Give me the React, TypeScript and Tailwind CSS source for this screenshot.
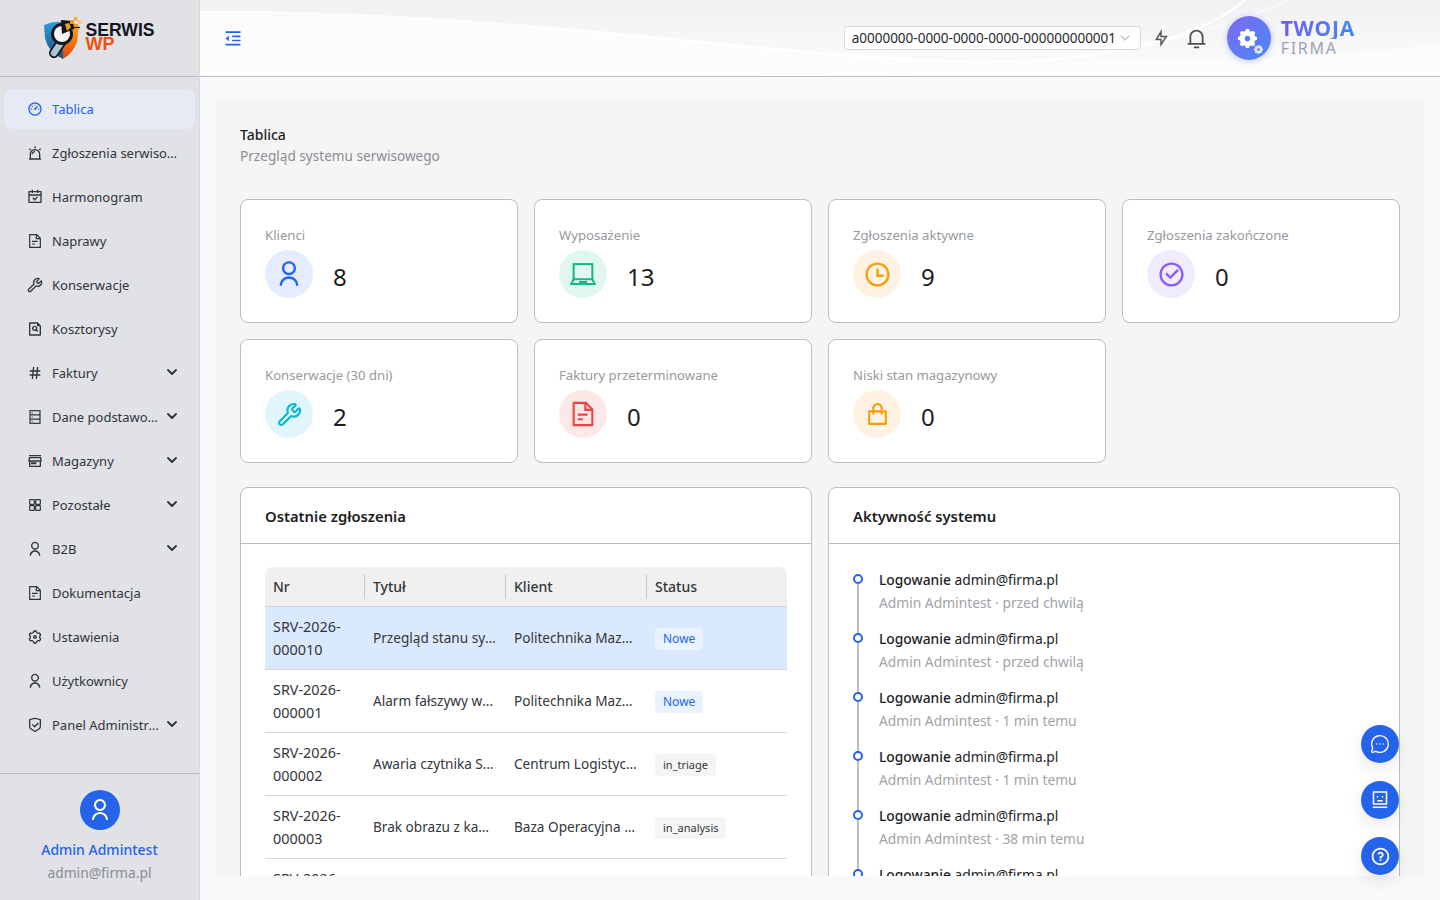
import {
  RiDashboard3Line, RiAlarmWarningLine, RiCalendarCheckLine, RiFileSearchLine, RiHashtag,
  RiStore3Line, RiUserLine, RiSettings3Line, RiShieldCheckLine,
  RiTimeLine, RiCheckboxCircleLine, RiShoppingBagLine, RiFlashlightLine, RiNotification3Line,
  RiQuestionLine, RiIndentDecrease, RiArrowDownSLine, RiSettings5Fill,
} from 'react-icons/ri'
import { Wrench, ChevronDown, MessageCircleMore } from 'lucide-react'

type IconProps = { size?: number; className?: string }

function DocIcon({ size = 24, className }: IconProps) {
  return (
    <svg width={size} height={size} viewBox="0 0 24 24" fill="none" stroke="currentColor" strokeWidth="1.8" className={className}>
      <path d="M4 2.5 H14.5 L20 8 V21.5 H4 Z" />
      <path d="M14 2.5 V8.5 H20" />
      <path d="M7.5 12.5 H16 M7.5 16.5 H12" />
    </svg>
  )
}

function RecordsIcon({ size = 24, className }: IconProps) {
  return (
    <svg width={size} height={size} viewBox="0 0 24 24" fill="none" stroke="currentColor" strokeWidth="1.8" className={className}>
      <rect x="4.5" y="2.5" width="15" height="19" />
      <path d="M4.5 8.8 H19.5 M4.5 15.2 H19.5" />
      <path d="M7 5.7 H8.5 M7 12 H8.5 M7 18.4 H8.5" />
    </svg>
  )
}

function LaptopIcon({ size = 24, className }: IconProps) {
  return (
    <svg width={size} height={size} viewBox="0 0 24 24" fill="none" stroke="currentColor" strokeWidth="1.7" className={className}>
      <rect x="4" y="3.5" width="16" height="13" />
      <path d="M4 16.5 L2 20.5 H22 L20 16.5" />
      <path d="M9.5 20.5 V18.8 H14.5 V20.5" />
    </svg>
  )
}

function TilesIcon({ size = 24, className }: IconProps) {
  return (
    <svg width={size} height={size} viewBox="0 0 24 24" fill="none" stroke="currentColor" strokeWidth="1.8" className={className}>
      <rect x="4" y="4" width="7" height="7" rx="1" />
      <rect x="13" y="4" width="7" height="7" rx="1" />
      <rect x="4" y="13" width="7" height="7" rx="1" />
      <rect x="13" y="13" width="7" height="7" rx="1" />
    </svg>
  )
}

const MENU = [
  { label: 'Tablica', icon: RiDashboard3Line, active: true },
  { label: 'Zgłoszenia serwisowe', icon: RiAlarmWarningLine },
  { label: 'Harmonogram', icon: RiCalendarCheckLine },
  { label: 'Naprawy', icon: DocIcon },
  { label: 'Konserwacje', icon: Wrench },
  { label: 'Kosztorysy', icon: RiFileSearchLine },
  { label: 'Faktury', icon: RiHashtag, sub: true },
  { label: 'Dane podstawowe', icon: RecordsIcon, sub: true },
  { label: 'Magazyny', icon: RiStore3Line, sub: true },
  { label: 'Pozostałe', icon: TilesIcon, sub: true },
  { label: 'B2B', icon: RiUserLine, sub: true },
  { label: 'Dokumentacja', icon: DocIcon },
  { label: 'Ustawienia', icon: RiSettings3Line },
  { label: 'Użytkownicy', icon: RiUserLine },
  { label: 'Panel Administracyjny', icon: RiShieldCheckLine, sub: true },
]

const STATS = [
  { label: 'Klienci', value: 8, icon: RiUserLine, size: 28, bg: 'bg-[#e6ecff]', fg: 'text-[#2563eb]' },
  { label: 'Wyposażenie', value: 13, icon: LaptopIcon, size: 28, bg: 'bg-[#e1f6ee]', fg: 'text-[#10b981]' },
  { label: 'Zgłoszenia aktywne', value: 9, icon: RiTimeLine, size: 29, bg: 'bg-[#fef3e2]', fg: 'text-[#f59e0b]' },
  { label: 'Zgłoszenia zakończone', value: 0, icon: RiCheckboxCircleLine, size: 29, bg: 'bg-[#f0ebfe]', fg: 'text-[#8b5cf6]' },
  { label: 'Konserwacje (30 dni)', value: 2, icon: Wrench, size: 25, bg: 'bg-[#e0f6fb]', fg: 'text-[#06b6d4]' },
  { label: 'Faktury przeterminowane', value: 0, icon: DocIcon, size: 28, bg: 'bg-[#fde8e8]', fg: 'text-[#ef4444]' },
  { label: 'Niski stan magazynowy', value: 0, icon: RiShoppingBagLine, size: 25, bg: 'bg-[#fef3e2]', fg: 'text-[#f59e0b]' },
]

const TICKETS = [
  { nr: '000010', title: 'Przegląd stanu systemu', client: 'Politechnika Mazowiecka', status: 'Nowe', selected: true },
  { nr: '000001', title: 'Alarm fałszywy wejścia', client: 'Politechnika Mazowiecka', status: 'Nowe' },
  { nr: '000002', title: 'Awaria czytnika SKD wejście', client: 'Centrum Logistyczne Północ', status: 'in_triage' },
  { nr: '000003', title: 'Brak obrazu z kamery 4', client: 'Baza Operacyjna Południe', status: 'in_analysis' },
  { nr: '000004', title: 'Wymiana akumulatora', client: 'Politechnika Mazowiecka', status: 'Nowe' },
]

const ACTIVITY = ['przed chwilą', 'przed chwilą', '1 min temu', '1 min temu', '38 min temu', '38 min temu']

function Logo() {
  return (
    <div className="flex items-center gap-[1px]">
      <svg width="41" height="44" viewBox="0 0 41 44">
        <defs>
          <linearGradient id="shieldL" x1="0" y1="0" x2="0" y2="1">
            <stop offset="0" stopColor="#2a9fd8" />
            <stop offset="1" stopColor="#1a4f80" />
          </linearGradient>
          <linearGradient id="shieldR" x1="0" y1="0" x2="0" y2="1">
            <stop offset="0" stopColor="#fbb01c" />
            <stop offset="1" stopColor="#e8450f" />
          </linearGradient>
        </defs>
        <path d="M1 9 Q10 5 20 6 L20 43 Q5 36 2 22 Z" fill="url(#shieldL)" />
        <path d="M20 6 Q30 5 36 10 L34 26 Q30 37 20 43 Z" fill="url(#shieldR)" />
        <path d="M21 22 L11 37" stroke="#14161d" strokeWidth="10" strokeLinecap="round" />
        <path d="M21 22 L11 37" stroke="#aec5d8" strokeWidth="6.5" strokeLinecap="round" />
        <circle cx="19" cy="18" r="11" fill="#14161d" />
        <circle cx="19" cy="18" r="8" fill="#f4f5f7" />
        <path d="M19 18 L18 4 L30 5 L31 13 Z" fill="#14161d" />
        <path d="M22 8 L26 7 L28 11 L24 15 Z" fill="#f2a11c" />
        <path d="M28 11.5 H37" stroke="#14161d" strokeWidth="1.2" />
        <rect x="27" y="4" width="4" height="4" fill="#f7931e" />
        <rect x="31" y="1" width="3.5" height="3.5" fill="#f7a83c" />
        <rect x="31" y="8" width="4" height="3" fill="#f7931e" />
        <rect x="35" y="4.5" width="3.5" height="3.5" fill="#fbc27a" />
      </svg>
      <div className="-mt-[3px] flex flex-col font-['Liberation_Sans',sans-serif] font-bold leading-[14px]">
        <span className="text-[17.6px] text-[#14161d]">SERWIS</span>
        <span className="text-[18px] text-[#f0500f]">WP</span>
      </div>
    </div>
  )
}

function CompanyLogo() {
  return (
    <div className="flex items-center gap-[10px]">
      <div className="relative flex h-[44px] w-[44px] items-center justify-center rounded-full bg-gradient-to-br from-[#7c68ee] to-[#3f88fa] shadow-[0_1px_6px_rgba(80,100,240,0.35)]">
        <RiSettings5Fill size={23} className="-translate-x-[1px] text-white" />
        <RiSettings5Fill size={11} className="absolute bottom-[5px] right-[7px] text-[#dfe6ff]" />
      </div>
      <div className="-mt-[2px] flex flex-col">
        <span className="bg-gradient-to-r from-[#6a5ee8] to-[#3f88fa] bg-clip-text text-[21px] font-bold leading-[22px] tracking-[0.8px] text-transparent">TWOJA</span>
        <span className="-mt-[1px] text-[16px] leading-[20px] tracking-[1.7px] text-[#9aa3b2]">FIRMA</span>
      </div>
    </div>
  )
}

function Sidebar() {
  return (
    <aside className="flex h-screen w-[200px] shrink-0 flex-col border-r border-[#d9dade] bg-[#e1e2e6]">
      <div className="flex h-[77px] shrink-0 items-center justify-center border-b border-[#bdbec2] pr-[1px]">
        <Logo />
      </div>
      <nav className="flex-1 pt-[12px]">
        {MENU.map(m => (
          <div
            key={m.label}
            className={`mx-[4px] mb-[4px] flex h-[40px] items-center rounded-lg pl-[23px] pr-[15px] text-[13px] ${m.active ? 'bg-[#e6eaf5] text-[#2563eb]' : 'text-[#30343b]'}`}
          >
            <m.icon size={16} className="mr-[9px] shrink-0" />
            <span className="min-w-0 flex-1 truncate pt-[2px]">{m.label}</span>
            {m.sub && <ChevronDown size={16} strokeWidth={2.8} className="ml-[3px] shrink-0 -translate-y-[1px]" />}
          </div>
        ))}
      </nav>
      <div className="flex h-[127px] shrink-0 flex-col items-center border-t border-[#bdbec2] pt-[16px]">
        <div className="flex h-[40px] w-[40px] items-center justify-center rounded-full bg-[#2563eb] text-white">
          <RiUserLine size={24} />
        </div>
        <div className="mt-[8px] text-[14px] font-medium leading-[23px] text-[#2563eb]">Admin Admintest</div>
        <div className="text-[13.8px] leading-[23px] text-[#8a8d93]">admin@firma.pl</div>
      </div>
    </aside>
  )
}

function Header() {
  return (
    <header className="relative flex h-[77px] shrink-0 items-center overflow-hidden border-b border-[#bdbec2] bg-[#fcfcfc] pl-[23px]">
      <svg className="pointer-events-none absolute inset-0" width="1240" height="76" viewBox="0 0 1240 76" fill="none">
        <defs>
          <linearGradient id="swoosh" x1="0" y1="0" x2="0" y2="1">
            <stop offset="0" stopColor="#f1f1f2" />
            <stop offset="1" stopColor="#fafafb" />
          </linearGradient>
        </defs>
        <path d="M0 0 H1240 V44 C1100 62 950 62 780 60 C580 58 330 14 0 14 Z" fill="url(#swoosh)" />
        <path d="M0 12 C330 12 580 60 780 62 C900 62 1000 40 1045 0" stroke="#fff" strokeWidth="3" opacity="0.8" />
        <path d="M560 76 C800 72 950 60 1090 0" stroke="#fff" strokeWidth="2" opacity="0.5" />
      </svg>
      <RiIndentDecrease size={20} className="relative text-[#2563eb]" />
      <div className="relative ml-auto mr-[85px] flex items-center">
        <div className="flex h-[24px] w-[297px] items-center rounded-[4px] border border-[#d9d9d9] bg-white pl-[7px] pr-[8px] text-[13.5px] text-[#26282c]">
          <span className="flex-1 whitespace-nowrap">a0000000-0000-0000-0000-000000000001</span>
          <RiArrowDownSLine size={18} className="shrink-0 text-[#c4c6ca]" />
        </div>
        <RiFlashlightLine size={18} className="ml-[11px] text-[#55585e]" />
        <RiNotification3Line size={21} className="ml-[16px] text-[#4b4e54]" />
        <div className="ml-[20px]"><CompanyLogo /></div>
      </div>
    </header>
  )
}

function StatCard({ s }: { s: typeof STATS[number] }) {
  return (
    <div className="h-[124px] rounded-lg border border-[#bdbdbd] bg-white px-[24px] pt-[24px]">
      <div className="text-[13.15px] leading-[23px] text-[#97999d]">{s.label}</div>
      <div className="mt-[3px] flex items-center">
        <div className={`flex h-[48px] w-[48px] items-center justify-center rounded-full ${s.bg} ${s.fg}`}>
          <s.icon size={s.size} />
        </div>
        <div className="ml-[20px] mt-[6px] text-[24px] leading-[36px] text-[#1d1d1f]">{s.value}</div>
      </div>
    </div>
  )
}

function Panel({ title, children }: { title: string; children: React.ReactNode }) {
  return (
    <div className="rounded-t-lg border border-[#bdbdbd] bg-white">
      <div className="flex h-[56px] items-center border-b border-[#bdbdbd] px-[24px] pt-[1px] text-[14.8px] font-semibold text-[#1d1d1f]">{title}</div>
      {children}
    </div>
  )
}

function StatusTag({ status }: { status: string }) {
  const isNew = status === 'Nowe'
  return (
    <span className={`inline-block rounded-[4px] px-[8px] leading-[22px] ${isNew ? 'bg-[#e8f3ff] text-[12px] text-[#2563eb]' : 'bg-[#f5f5f5] text-[11px] text-[#33363b]'}`}>{status}</span>
  )
}

function TicketsTable() {
  return (
    <div className="px-[24px] pt-[23px]">
      <table className="w-full table-fixed border-collapse text-[13.6px] leading-[23px] text-[#33363b]">
        <colgroup>
          <col className="w-[100px]" />
          <col className="w-[141px]" />
          <col className="w-[141px]" />
          <col />
        </colgroup>
        <thead>
          <tr className="h-[39px] bg-[#f0f0f0] text-left">
            {['Nr', 'Tytuł', 'Klient', 'Status'].map((h, i) => (
              <th key={h} className={`relative border-b border-[#d4d4d4] px-[8px] text-[14px] font-medium ${i === 0 ? 'rounded-tl-lg' : ''} ${i === 3 ? 'rounded-tr-lg' : ''}`}>
                {i > 0 && <span className="absolute left-[-1px] top-[7px] h-[25px] w-px bg-[#c8c8c8]" />}
                {h}
              </th>
            ))}
          </tr>
        </thead>
        <tbody>
          {TICKETS.map(t => (
            <tr key={t.nr} className={`h-[63px] border-b border-[#d9d9d9] ${t.selected ? 'bg-[#dbe9fe]' : ''}`}>
              <td className="px-[8px] text-[14.4px]">SRV-2026-<br />{t.nr}</td>
              <td className="truncate px-[8px]">{t.title}</td>
              <td className="truncate px-[8px]">{t.client}</td>
              <td className="px-[8px]"><StatusTag status={t.status} /></td>
            </tr>
          ))}
        </tbody>
      </table>
    </div>
  )
}

function Activity() {
  return (
    <div className="px-[24px] pt-[24px]">
      {ACTIVITY.map((when, i) => (
        <div key={i} className="relative h-[59px] pl-[26px] text-[13.8px] leading-[23px]">
          <span className="absolute bottom-[-11px] left-[4px] top-[11px] w-[2px] bg-[#bdbdbd]" />
          <span className="absolute left-0 top-[6px] h-[10px] w-[10px] rounded-full border-2 border-[#2563eb] bg-white" />
          <div className="text-[#1d1d1f]"><span className="font-medium">Logowanie</span> admin@firma.pl</div>
          <div className="text-[#a1a3a7]">Admin Admintest · {when}</div>
        </div>
      ))}
    </div>
  )
}

export default function App() {
  return (
    <div className="flex h-screen overflow-hidden bg-[#f8f9fb] font-['Noto_Sans',sans-serif]">
      <Sidebar />
      <main className="flex min-w-0 flex-1 flex-col">
        <Header />
        <div className="min-h-0 flex-1 px-[16px] py-[24px]">
          <div className="h-full overflow-hidden bg-[#f5f5f5] p-[24px]">
            <div className="text-[14px] font-medium leading-[20px] text-[#1d1d1f]">Tablica</div>
            <div className="text-[13.6px] leading-[22px] text-[#8a8d93]">Przegląd systemu serwisowego</div>
            <div className="mt-[32px] grid grid-cols-4 gap-[16px]">
              {STATS.map(s => <StatCard key={s.label} s={s} />)}
            </div>
            <div className="mt-[24px] grid grid-cols-2 gap-[16px]">
              <Panel title="Ostatnie zgłoszenia"><TicketsTable /></Panel>
              <Panel title="Aktywność systemu"><Activity /></Panel>
            </div>
          </div>
        </div>
      </main>
      <div className="fixed bottom-[25px] right-[41px] flex flex-col gap-[18px]">
        <button className="flex h-[38px] w-[38px] items-center justify-center rounded-full bg-[#2563eb] text-white shadow-[0_6px_16px_rgba(0,0,0,0.1)]"><MessageCircleMore size={20} strokeWidth={1.6} /></button>
        <button className="flex h-[38px] w-[38px] items-center justify-center rounded-full bg-[#2563eb] text-white shadow-[0_6px_16px_rgba(0,0,0,0.1)]">
          <svg width="18" height="18" viewBox="0 0 18 18" fill="none" stroke="currentColor" strokeWidth="1.5">
            <rect x="2.5" y="1" width="13" height="12" />
            <path d="M1.8 16.3 H16.2" />
            <path d="M6.5 5 V6.6 M11.5 5 V6.6" />
            <path d="M6.3 9.8 H11.7" />
          </svg>
        </button>
        <button className="flex h-[38px] w-[38px] items-center justify-center rounded-full bg-[#2563eb] text-white shadow-[0_6px_16px_rgba(0,0,0,0.1)]"><RiQuestionLine size={21} /></button>
      </div>
    </div>
  )
}
